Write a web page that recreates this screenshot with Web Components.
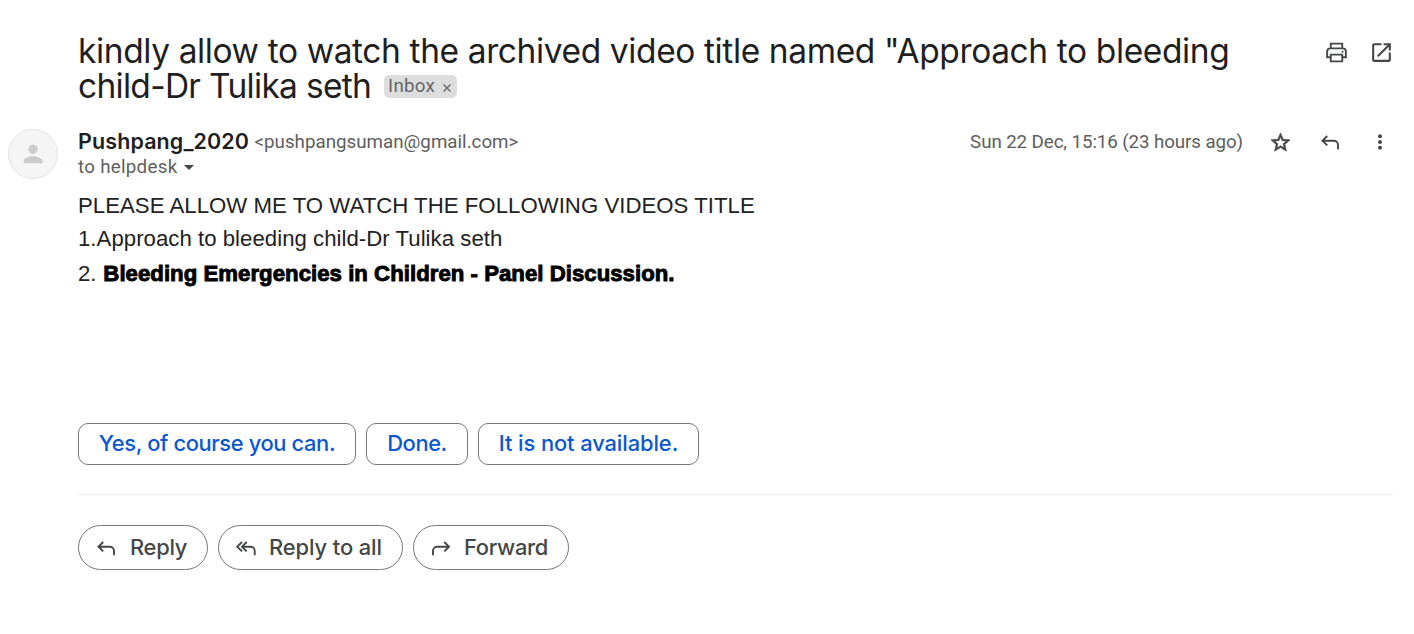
<!DOCTYPE html>
<html lang="en"><head><meta charset="utf-8"><title>Mail</title>
<style>body{margin:0;background:#fff;font-family:Inter,"Liberation Sans",sans-serif;color:#1f1f1f}</style></head>
<body>
<mail-thread>
  <mail-subject slot="subject"></mail-subject>
  <mail-header slot="header"></mail-header>
  <mail-body slot="body"></mail-body>
  <smart-reply slot="smart" style="--w:278px;--ls:-.38px">Yes, of course you can.</smart-reply>
  <smart-reply slot="smart" style="--w:102px;--ls:-.4px">Done.</smart-reply>
  <smart-reply slot="smart" style="--w:221px;--ls:-.1px">It is not available.</smart-reply>
  <action-button slot="actions" icon="reply" style="--w:130px;--ls:-.3px;--gap:12px">Reply</action-button>
  <action-button slot="actions" icon="replyall" style="--w:185px;--ls:-.1px">Reply to all</action-button>
  <action-button slot="actions" icon="forward" style="--w:156px;--ls:-.3px">Forward</action-button>
</mail-thread>
<script>
const ICONS = {
  print:'<path fill="none" stroke="currentColor" stroke-width="1.800" d="M6.500 8V3.500h11V8M6.500 16.500H3V11c0-1.700 1.300-3 3-3h12c1.700 0 3 1.300 3 3v5.500h-3.500M6.500 14h11v6.500h-11z"/><circle cx="17.800" cy="11.300" r="1"/>',
  open:'<path d="M19 19H5V5h7V3H5c-1.100 0-2 .9-2 2v14c0 1.100.9 2 2 2h14c1.100 0 2-.9 2-2v-7h-2v7zM14 3v2h3.590l-9.830 9.830 1.410 1.410L19 6.410V10h2V3h-7z"/>',
  star:'<path stroke="currentColor" stroke-width=".7" d="M22 9.240l-7.190-.62L12 2 9.190 8.630 2 9.240l5.460 4.730L5.820 21 12 17.270 18.180 21l-1.630-7.030L22 9.240zM12 15.400l-3.760 2.270 1-4.280-3.320-2.880 4.380-.38L12 6.100l1.710 4.040 4.380.38-3.320 2.880 1 4.280L12 15.400z"/>',
  reply:'<path fill="none" stroke="currentColor" stroke-width="1.900" d="M9.200 5L4.500 9.700l4.700 4.700M4 9.700h11.800c2.400 0 4.200 1.800 4.200 4.200v4.300"/>',
  replyall:'<path fill="none" stroke="currentColor" stroke-width="1.900" d="M8 5L3.300 9.700 8 14.400M12.700 5L8 9.700l4.700 4.700M8 9.700h8.500c2.400 0 4.200 1.800 4.200 4.200v4.300"/>',
  forward:'<path fill="none" stroke="currentColor" stroke-width="1.900" d="M15.300 5l4.700 4.700-4.700 4.700M20.500 9.700H8.200C5.800 9.700 4 11.500 4 13.900v4.300"/>',
  more:'<circle cx="12" cy="5.700" r="2.150"/><circle cx="12" cy="12" r="2.150"/><circle cx="12" cy="18.300" r="2.150"/>',
  person:'<path d="M12 12c2.210 0 4-1.790 4-4s-1.790-4-4-4-4 1.790-4 4 1.790 4 4 4zm0 2c-2.670 0-8 1.340-8 4v2h16v-2c0-2.660-5.330-4-8-4z"/>'
};
const define = (name, html) => customElements.define(name, class extends HTMLElement {
  constructor(){ super(); this.attachShadow({mode:'open'}).innerHTML = html; }
});
customElements.define('mail-icon', class extends HTMLElement {
  connectedCallback(){
    if(this.shadowRoot) return;
    this.attachShadow({mode:'open'}).innerHTML = `<style>:host{display:block;flex:none;width:var(--s,24px);height:var(--s,24px);color:#444746}svg{display:block;width:100%;height:100%;fill:currentColor}</style><svg viewBox="0 0 24 24">${ICONS[this.getAttribute('name')]}</svg>`;
  }
});
define('inbox-chip', `<style>:host{display:inline-flex;align-items:center;box-sizing:border-box;width:73px;height:23px;padding-left:4px;border-radius:5px;background:#ddd;color:#666;font:18.750px/23px Roboto,sans-serif;letter-spacing:.25px}svg{width:8px;height:8px;margin:2px 0 0 8px}</style><span>Inbox</span><svg viewBox="0 0 8 8"><path d="M.5.5l7 7M7.500.5l-7 7" stroke="#666" stroke-width="1.400"/></svg>`);
define('mail-subject', `<style>
:host{display:flex;justify-content:space-between;height:73px;padding:34px 20px 0 78px}
h1{margin:0;font-size:33.500px;font-weight:400;line-height:35px;letter-spacing:-.385px;white-space:nowrap}
.last{display:flex}.last span{letter-spacing:-.7px}
inbox-chip{margin:6px 0 0 13px}
.tools{display:flex;gap:20px;padding-top:6px}
</style><h1><div>kindly allow to watch the archived video title named "Approach to bleeding</div><div class="last"><span>child-Dr Tulika seth</span><inbox-chip></inbox-chip></div></h1><div class="tools"><mail-icon name="print" style="--s:25px"></mail-icon><mail-icon name="open" style="--s:25px"></mail-icon></div>`);
define('mail-header', `<style>
:host{display:flex;height:78px;padding:22px 23px 0 8px;box-sizing:border-box;color:#5e5e5e;font:18.750px/25px Roboto,sans-serif}
.avatar{box-sizing:border-box;display:flex;align-items:center;justify-content:center;width:50px;height:50px;border:1px solid #e2e2e2;border-radius:50%;background:#f5f5f5;margin-right:20px}
.avatar mail-icon{color:#ccc}
.who{flex:1}.line{display:flex;align-items:center;height:25px;white-space:nowrap}
.line span,.meta span{padding-top:2px}
b{font:600 21.500px/25px Inter,sans-serif;color:#1f1f1f;width:176.500px;letter-spacing:.1px}
i{border:5px solid transparent;border-top-color:#444746;border-bottom:0;margin:2px 0 0 7px}
.meta{display:flex;height:25px;align-items:center;white-space:nowrap;letter-spacing:-.1px}
</style><div class="avatar"><mail-icon name="person" style="--s:28px"></mail-icon></div>
<div class="who"><div class="line"><b>Pushpang_2020</b><span>&lt;pushpangsuman@gmail.com&gt;</span></div><div class="line"><span style="letter-spacing:.28px">to helpdesk</span><i></i></div></div>
<div class="meta"><span>Sun 22 Dec, 15:16 (23 hours ago)</span><mail-icon name="star" style="--s:23px;margin:1px 0 0 26px"></mail-icon><mail-icon name="reply" style="--s:24px;margin:2px 0 0 26px"></mail-icon><mail-icon name="more" style="--s:22px;margin-left:27px"></mail-icon></div>`);
define('mail-body', `<style>
:host{display:block;height:238px;padding:4px 0 0 78px;box-sizing:border-box;font:22.200px/33px "Liberation Sans",Arial,sans-serif;letter-spacing:.03px;color:#222}
p{margin:0}p+p+p{margin-top:2px}b{color:#000;-webkit-text-stroke:.9px #000;margin-left:.6px}
</style><p>PLEASE ALLOW ME TO WATCH THE FOLLOWING VIDEOS TITLE</p><p>1.Approach to bleeding child-Dr Tulika seth</p><p>2. <b>Bleeding Emergencies in Children - Panel Discussion.</b></p>`);
define('smart-reply', `<style>:host{display:flex;justify-content:center;box-sizing:border-box;width:var(--w);height:42px;border:1px solid #747775;border-radius:10px;color:#0b57d0;font:500 21.900px/39px Inter,sans-serif;letter-spacing:var(--ls);white-space:nowrap}</style><slot></slot>`);
customElements.define('action-button', class extends HTMLElement {
  connectedCallback(){
    if(this.shadowRoot) return;
    this.attachShadow({mode:'open'}).innerHTML = `<style>:host{display:flex;align-items:center;box-sizing:border-box;width:var(--w);height:45px;padding-left:15px;border:1px solid #747775;border-radius:23px;color:#444746;font:500 21.900px/43px Inter,sans-serif;letter-spacing:var(--ls);white-space:nowrap}mail-icon{margin:2px var(--gap,11px) 0 0}</style><mail-icon name="${this.getAttribute('icon')}" style="--s:24px"></mail-icon><slot></slot>`;
  }
});
define('mail-thread', `<style>:host{display:block;width:1414px;height:634px;overflow:hidden}
.row{display:flex;gap:10px;padding-left:78px}
hr{margin:29px 21px 30px 78px;border:0;height:1px;background:#eceff1}
</style><slot name="subject"></slot><slot name="header"></slot><slot name="body"></slot><div class="row"><slot name="smart"></slot></div><hr><div class="row"><slot name="actions"></slot></div>`);
</script></body></html>
